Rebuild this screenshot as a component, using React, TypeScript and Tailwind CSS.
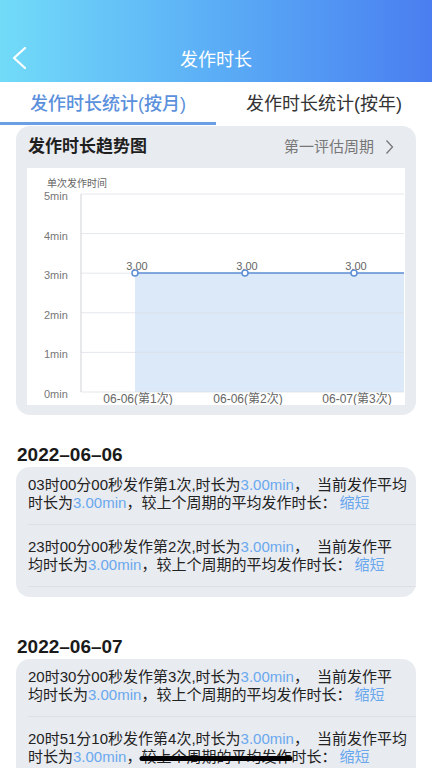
import React from 'react';

// Each record's text is laid out in two fixed lines, as in the app
const groups: { date: string; items: { first: string; tail: string; second: string }[] }[] = [
  {
    date: '2022-06-06',
    items: [
      { first: '03时00分00秒发作第1次,时长为', tail: '当前发作平均', second: '时长为' },
      { first: '23时00分00秒发作第2次,时长为', tail: '当前发作平', second: '均时长为' },
    ],
  },
  {
    date: '2022-06-07',
    items: [
      { first: '20时30分00秒发作第3次,时长为', tail: '当前发作平', second: '均时长为' },
      { first: '20时51分10秒发作第4次,时长为', tail: '当前发作平均', second: '时长为' },
    ],
  },
];

const yLabels = ['5min', '4min', '3min', '2min', '1min', '0min'];
const points = [
  { x: 107, label: '06-06(第1次)' },
  { x: 217, label: '06-06(第2次)' },
  { x: 326, label: '06-07(第3次)' },
];

const TrendChart: React.FC = () => (
  <svg viewBox="0 0 376 237" className="block h-full w-full">
    <text x="19" y="19" fontSize="10" fill="#666">单次发作时间</text>
    <rect x="107" y="105" width="269" height="119" fill="#dce9f9" />
    {yLabels.map((l, i) => {
      const y = 26 + i * 39.6;
      return (
        <g key={l}>
          <line x1="53" x2="376" y1={y} y2={y} stroke="#d9dde3" strokeOpacity="0.7" strokeWidth="1" />
          <text x="16" y={y + 6} fontSize="11" fill="#777">{l}</text>
        </g>
      );
    })}
    <line x1="53" x2="53" y1="26" y2="224" stroke="#cfd2d6" strokeWidth="1" />
    <line x1="107" x2="376" y1="105" y2="105" stroke="#5d8fd4" strokeWidth="1.5" />
    {points.map(p => (
      <g key={p.label}>
        <circle cx={p.x} cy="105" r="3" fill="#fff" stroke="#5d8fd4" strokeWidth="1.5" />
        <text x={p.x + 2} y="102" fontSize="11" fill="#666" textAnchor="middle">3.00</text>
        <text x={p.x + 3} y="235" fontSize="12" fill="#666" textAnchor="middle">{p.label}</text>
      </g>
    ))}
  </svg>
);

const App: React.FC = () => {
  return (
    <div className="min-h-screen bg-white pb-6 [font-family:'Liberation_Sans','Noto_Sans_CJK_SC',sans-serif]">
      {/* Header */}
      <div className="relative flex h-[82px] items-end justify-center bg-linear-to-r from-[#72dbf8] to-[#4a7ef0] pb-[8px]">
        <svg className="absolute left-[9px] top-[46px]" width="20" height="24" viewBox="0 0 20 24" fill="none">
          <polyline points="16,2 5,12 16,22" stroke="#fff" strokeWidth="2.2" strokeLinecap="round" strokeLinejoin="round" />
        </svg>
        <span className="text-[18px] text-white">发作时长</span>
      </div>

      {/* Tabs */}
      <div className="flex h-[43px]">
        <div className="flex flex-1 items-center justify-center border-b-[3px] border-[#6a9fe3] pt-[5px] text-[18px] font-medium text-[#5b90dc]">
          发作时长统计(按月)
        </div>
        <div className="flex flex-1 items-center justify-center border-b-[3px] border-transparent pt-[5px] text-[18px] text-[#333]">
          发作时长统计(按年)
        </div>
      </div>

      {/* Chart card */}
      <div className="mx-4 mt-px rounded-[14px] bg-[#e8ebf0] px-[11px] pb-[10px]">
        <div className="flex h-[42px] items-center justify-between pl-px pr-[11px]">
          <span className="text-[17px] font-bold text-[#1f1f1f]">发作时长趋势图</span>
          <span className="flex items-center text-[15px] text-[#777]">
            第一评估周期
            <svg className="ml-[11px]" width="9" height="16" viewBox="0 0 9 16" fill="none">
              <polyline points="1.5,1.5 7.5,8 1.5,14.5" stroke="#777" strokeWidth="1.3" />
            </svg>
          </span>
        </div>
        <div className="h-[237px] bg-white">
          <TrendChart />
        </div>
      </div>

      {/* Records */}
      {groups.map((g, gi) => (
        <div key={g.date} className={`px-4 ${gi === 0 ? 'mt-[28px]' : 'mt-[38px]'}`}>
          <div className="flex h-[24px] items-center pl-px text-[19px] font-bold text-[#1a1a1a]">
            {g.date.replace(/-/g, '–')}
          </div>
          <div className="rounded-[14px] bg-[#e8ebf0] pb-[10px] pl-3 pt-[9px]">
            {g.items.map((it, i) => (
              <div
                key={i}
                className={`whitespace-nowrap border-b border-[#dde0e5] pb-3 text-[15px] leading-[18px] text-[#222] ${i === 0 ? '' : 'pt-[13px]'}`}
              >
                <div>
                  {it.first}
                  <span className="text-[#6aa8ee]">3.00min</span>，<span className="ml-[8px]">{it.tail}</span>
                </div>
                <div>
                  {it.second}
                  <span className="text-[#6aa8ee]">3.00min</span>，较上个周期的平均发作时长：
                  <span className="ml-[3px] text-[#6aa8ee]">缩短</span>
                </div>
              </div>
            ))}
          </div>
        </div>
      ))}

      {/* Home indicator */}
      <div className="fixed bottom-[7px] left-1/2 h-[5px] w-[153px] -translate-x-1/2 rounded-full bg-black" />
    </div>
  );
};

export default App;
